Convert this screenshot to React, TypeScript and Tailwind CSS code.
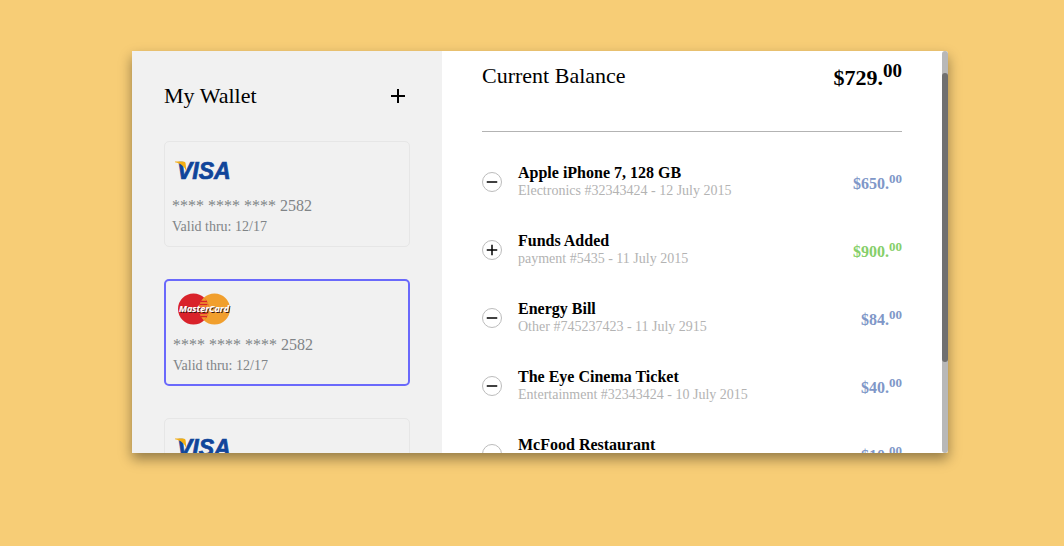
import { MdAdd, MdRemove } from "react-icons/md";

type Card = { brand: "visa" | "mastercard"; active: boolean };
type Entry = {
  title: string;
  detail: string;
  whole: string;
  cents: string;
  credit: boolean;
};

const cards: Card[] = [
  { brand: "visa", active: false },
  { brand: "mastercard", active: true },
  { brand: "visa", active: false },
];

const entries: Entry[] = [
  { title: "Apple iPhone 7, 128 GB", detail: "Electronics #32343424 - 12 July 2015", whole: "$650.", cents: "00", credit: false },
  { title: "Funds Added", detail: "payment #5435 - 11 July 2015", whole: "$900.", cents: "00", credit: true },
  { title: "Energy Bill", detail: "Other #745237423 - 11 July 2915", whole: "$84.", cents: "00", credit: false },
  { title: "The Eye Cinema Ticket", detail: "Entertainment #32343424 - 10 July 2015", whole: "$40.", cents: "00", credit: false },
  { title: "McFood Restaurant", detail: "Food #32343424 - 09 July 2015", whole: "$10.", cents: "00", credit: false },
];

function VisaLogo() {
  return (
    <svg width="64" height="44" viewBox="0 0 64 44" role="img" aria-label="Visa">
      <text x="5" y="31" fill="#10459a" stroke="#10459a" strokeWidth="0.7" fontFamily="'Liberation Sans', sans-serif" fontSize="23" fontWeight="700" fontStyle="italic">
        VISA
      </text>
      <path d="M3 13.5H11C12.6 13.5 13.4 14.2 13.6 15.4L14.4 23.5C12.5 18.5 9 15.4 3 14.3Z" fill="#f2ae14" />
    </svg>
  );
}

function MasterCardLogo() {
  return (
    <svg width="64" height="44" viewBox="0 0 64 44" role="img" aria-label="MasterCard">
      <circle cx="41.5" cy="22" r="15.5" fill="#f19f2d" />
      <circle cx="20.5" cy="22" r="15.5" fill="#d9222a" />
      <path d="M31 10.6a15.5 15.5 0 0 1 0 22.8a15.5 15.5 0 0 1 0-22.8Z" fill="#f19f2d" />
      <path d="M28 14.5h6M27 17.5h7.5M26 20.5h8M26 23.5h8M27 26.5h7.5M28 29.5h6" stroke="#d9222a" strokeWidth="1.5" />
      <g fontFamily="'Open Sans', sans-serif" fontSize="9" fontWeight="700" fontStyle="italic">
        <text x="7" y="26" fill="#3a1512">MasterCard</text>
        <text x="6" y="25" fill="#fff" stroke="#fff" strokeWidth="0.2">MasterCard</text>
      </g>
    </svg>
  );
}

function WalletCard({ card }: { card: Card }) {
  return (
    <button
      type="button"
      aria-pressed={card.active}
      className={
        card.active
          ? "block w-full rounded-[5px] border-2 border-[#6a69fb] px-[7px] pt-1.5 pb-[9px] text-left text-[#808487]"
          : "block w-full rounded-[5px] border border-[#e6e6e6] px-[7px] pt-1.5 pb-[10px] text-left text-[#808487]"
      }
    >
      {card.brand === "visa" ? <VisaLogo /> : <MasterCardLogo />}
      <span className="block pt-0.5 text-base leading-6">**** **** **** 2582</span>
      <span className="block text-sm leading-[18px]">Valid thru: 12/17</span>
    </button>
  );
}

function EntryRow({ entry }: { entry: Entry }) {
  const Icon = entry.credit ? MdAdd : MdRemove;
  return (
    <li className="flex items-center gap-4">
      <span className="flex size-5 shrink-0 items-center justify-center rounded-full border border-[#bcbcbc] text-black">
        <Icon className="size-[18px] shrink-0" />
      </span>
      <div className="min-w-0 flex-1">
        <h3 className="text-base leading-[18px] font-bold">{entry.title}</h3>
        <p className="text-sm leading-[18px] text-[#b3b3b3]">{entry.detail}</p>
      </div>
      <p className={entry.credit ? "pt-1 text-base font-bold text-[#86cf6a]" : "pt-1 text-base font-bold text-[#8097c8]"}>
        {entry.whole}
        <sup className="text-[13px]">{entry.cents}</sup>
      </p>
    </li>
  );
}

export default function App() {
  return (
    <main className="flex h-screen bg-[#f7cd76] pt-[51px] pr-[116px] pb-[93px] pl-[132px] font-['Liberation_Serif',serif] text-black">
      <div className="flex min-w-0 flex-1 shadow-[0_6px_12px_rgba(0,0,0,0.4)]">
        <aside className="w-[310px] shrink-0 overflow-hidden bg-[#f1f1f1] px-8 pt-[31px]">
          <header className="flex items-center justify-between">
            <h1 className="text-[22px] leading-7">My Wallet</h1>
            <button type="button" aria-label="Add card">
              <MdAdd className="size-6" />
            </button>
          </header>
          <div className="flex flex-col gap-8 pt-[31px]">
            {cards.map((card, i) => (
              <WalletCard key={i} card={card} />
            ))}
          </div>
        </aside>
        <section className="flex min-w-0 flex-1 rounded-r-[3px] bg-white">
          <div className="min-w-0 flex-1 overflow-hidden px-10 pt-[11px]">
            <header className="flex items-start justify-between border-b border-[#b3b3b3] pb-[37px]">
              <h2 className="text-[22px] leading-7">Current Balance</h2>
              <p className="text-[22px] leading-8 font-bold">
                $729.<sup className="-top-2 text-[19px]">00</sup>
              </p>
            </header>
            <ul className="flex flex-col gap-8 pt-8">
              {entries.map((entry) => (
                <EntryRow key={entry.title} entry={entry} />
              ))}
            </ul>
          </div>
          <div className="w-1.5 shrink-0 rounded-[3px] bg-[#b8b8b8] pt-[22px]">
            <div className="h-[76%] rounded-[3px] bg-[#707070]" />
          </div>
        </section>
      </div>
    </main>
  );
}
